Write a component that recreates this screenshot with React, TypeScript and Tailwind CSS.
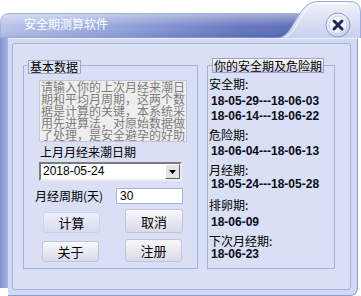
import React from 'react';

const dates = "font-['Liberation_Sans',Arial,sans-serif] font-bold text-[12px] text-[#0b0b1a] leading-[15px] h-[15px] pl-[3px] whitespace-nowrap";
const label = "text-[12px] leading-[15px] h-[15px] pl-[1px] whitespace-nowrap";
const btn =
  "flex items-center justify-center rounded-[3px] border border-[#c3c4d6] bg-gradient-to-b from-[#f8f8fb] to-[#d9dae7] text-[13px] leading-none text-black";

const intro = [
  '请输入你的上次月经来潮日',
  '期和平均月周期，这两个数',
  '据是计算的关键，本系统采',
  '用先进算法，对原始数据做',
  '了处理，是安全避孕的好助',
];

const CloseIcon: React.FC = () => (
  <svg width="26" height="26" viewBox="0 0 26 26">
    <defs>
      <radialGradient id="cg" cx="0.4" cy="0.35" r="0.7">
        <stop offset="0" stopColor="#ffffff" />
        <stop offset="0.6" stopColor="#eef1fa" />
        <stop offset="1" stopColor="#b7c0e0" />
      </radialGradient>
    </defs>
    <circle cx="13" cy="13" r="12" fill="url(#cg)" stroke="#8f9ac4" />
    <circle cx="13" cy="13" r="9" fill="none" stroke="#c9d0ea" />
    <path d="M9 9 L17 17 M17 9 L9 17" stroke="#1b2656" strokeWidth="3" strokeLinecap="round" />
  </svg>
);

const Arrow: React.FC = () => (
  <svg width="7" height="4" viewBox="0 0 7 4">
    <path d="M0 0 H7 L3.5 4 Z" fill="#000" />
  </svg>
);

export default function App() {
  return (
    <div className="w-[361px] h-[296px] bg-white overflow-hidden font-['Noto_Sans_CJK_SC','Noto_Sans',sans-serif] text-black select-none">
      {/* title bar */}
      <div className="relative h-[38px]">
        <svg className="absolute inset-0" width="361" height="38" viewBox="0 0 361 38">
          <defs>
            <linearGradient id="tbh" x1="0" y1="0" x2="1" y2="0">
              <stop offset="0" stopColor="#b8c3ea" />
              <stop offset="0.35" stopColor="#95a4dc" />
              <stop offset="0.78" stopColor="#6374bd" />
              <stop offset="1" stopColor="#5467b3" />
            </linearGradient>
            <linearGradient id="tbv" x1="0" y1="0" x2="0" y2="1">
              <stop offset="0" stopColor="#ffffff" stopOpacity="0.45" />
              <stop offset="0.5" stopColor="#ffffff" stopOpacity="0.05" />
              <stop offset="1" stopColor="#1c2a70" stopOpacity="0.1" />
            </linearGradient>
            <linearGradient id="bump" x1="0" y1="0" x2="0" y2="1">
              <stop offset="0" stopColor="#f1f4fc" />
              <stop offset="1" stopColor="#c6cfef" />
            </linearGradient>
          </defs>
          <path d="M0.5 38 L0.5 23 Q0.5 13.5 10 13.5 L305 13.5 L305 38 Z" fill="url(#tbh)" stroke="#a3afdf" />
          <path d="M1 38 L1 23 Q1 14 10 14 L305 14 L305 38 Z" fill="url(#tbv)" />
          <path d="M276 38.5 C295 38.5 296 1.5 318 1.5 L350 1.5 Q360.5 1.5 360.5 12 L360.5 38.5 Z" fill="url(#bump)" stroke="#a0acdc" />
          <path d="M284 37 C298 36 300 4 318 3.5 L349 3.5" fill="none" stroke="#ffffff" strokeOpacity="0.8" />
        </svg>
        <div className="relative pl-[24px] pt-[15px] text-[12px] leading-[18px] text-white whitespace-nowrap">安全期测算软件</div>
        <button className="absolute left-[325px] top-[12px] w-[26px] h-[26px]">
          <CloseIcon />
        </button>
      </div>

      {/* body */}
      <div className="flex h-[258px]">
        <div className="w-[8px] h-[250px] bg-gradient-to-r from-[#7f90d1] to-[#a7b4e5]" />
        <div className="w-[350px] h-full bg-[#d2d9f2] rounded-br-[8px] border-t border-t-[#eef1fb] border-r border-b border-r-[#8e9dd3] border-b-[#8e9dd3] pl-[4px] pt-[4px] pr-[6px] pb-[5px]">
          <div className="h-full border border-[#a7b0da] rounded-[3px] bg-[#d9dff4] flex pl-[10px] pt-[21px] gap-[9px]">
            {/* left group */}
            <div className="relative w-[175px] h-[204px] border border-[#a9b1d8]">
              <div className="absolute left-[4px] top-[-6px] w-[53px] h-[14px] border border-[#9ea6cf] bg-[#dfe3f6] text-[12px] leading-[12px] pl-[1px] whitespace-nowrap">
                基本数据
              </div>
              <div className="ml-[15px] mt-[14px] w-[148px] h-[62px] overflow-hidden border border-[#c4c7d6] bg-[#eeeeef] pl-[1px] text-[12px] text-[#7c7c7c]">
                {intro.map((line) => (
                  <div key={line} className="h-[12px] leading-[12px] whitespace-nowrap">
                    {line}
                  </div>
                ))}
              </div>
              <div className="ml-[16px] mt-[3px] h-[14px] text-[12px] leading-[14px] whitespace-nowrap">上月月经来潮日期</div>
              <div className="ml-[15px] mt-[3px] w-[143px] h-[19px] flex bg-white border-2 border-t-[#7b7b7b] border-l-[#7b7b7b] border-r-[#ececec] border-b-[#ececec]">
                <div className="flex-1 pl-[2px] font-['Liberation_Sans',Arial,sans-serif] text-[12px] leading-[15px]">2018-05-24</div>
                <div className="w-[15px] h-full flex items-center justify-center bg-[#e6e6e6] border border-t-white border-l-white border-r-[#5f5f5f] border-b-[#5f5f5f]">
                  <Arrow />
                </div>
              </div>
              <div className="mt-[7px] h-[16px] flex items-center">
                <div className="ml-[11px] w-[81px] text-[12px] leading-[16px] whitespace-nowrap">月经周期(天)</div>
                <div className="w-[67px] h-[16px] bg-white border border-[#a8b1d9] pl-[3px] font-['Liberation_Sans',Arial,sans-serif] text-[12px] leading-[14px]">
                  30
                </div>
              </div>
              <div className="mt-[5px] h-[24px] flex items-start">
                <button className="ml-[19px] mt-[3px] w-[57px] h-[21px] flex items-center justify-center rounded-[3px] border border-[#cdd3ec] bg-gradient-to-b from-[#eceffa] to-[#d7dcf1] text-[13px] leading-none text-black">
                  计算
                </button>
                <button className={`${btn} ml-[25px] w-[58px] h-[24px]`}>取消</button>
              </div>
              <div className="mt-[6px] h-[23px] flex items-start">
                <button className={`${btn} ml-[18px] mt-[2px] w-[57px] h-[21px]`}>关于</button>
                <button className={`${btn} ml-[26px] w-[57px] h-[23px]`}>注册</button>
              </div>
            </div>

            {/* right group */}
            <div className="relative w-[128px] h-[204px] border border-[#a9b1d8] pt-[10px]">
              <div className="absolute left-[4px] top-[-8px] w-[112px] h-[15px] border border-[#9aa1c4] bg-gradient-to-b from-white to-[#cdd0e2] text-[12px] leading-[13px] text-center whitespace-nowrap">
                你的安全期及危险期
              </div>
              <div className={label}>安全期:</div>
              <div className={`${dates} mt-[3px]`}>18-05-29---18-06-03</div>
              <div className={dates}>18-06-14---18-06-22</div>
              <div className={`${label} mt-[3px]`}>危险期:</div>
              <div className={`${dates} mt-[2px]`}>18-06-04---18-06-13</div>
              <div className={`${label} mt-[3px]`}>月经期:</div>
              <div className={dates}>18-05-24---18-05-28</div>
              <div className={`${label} mt-[5px]`}>排卵期:</div>
              <div className={`${dates} mt-[3px]`}>18-06-09</div>
              <div className={`${label} mt-[3px]`}>下次月经期:</div>
              <div className={`${dates} mt-[-1px]`}>18-06-23</div>
            </div>
          </div>
        </div>
      </div>
    </div>
  );
}
